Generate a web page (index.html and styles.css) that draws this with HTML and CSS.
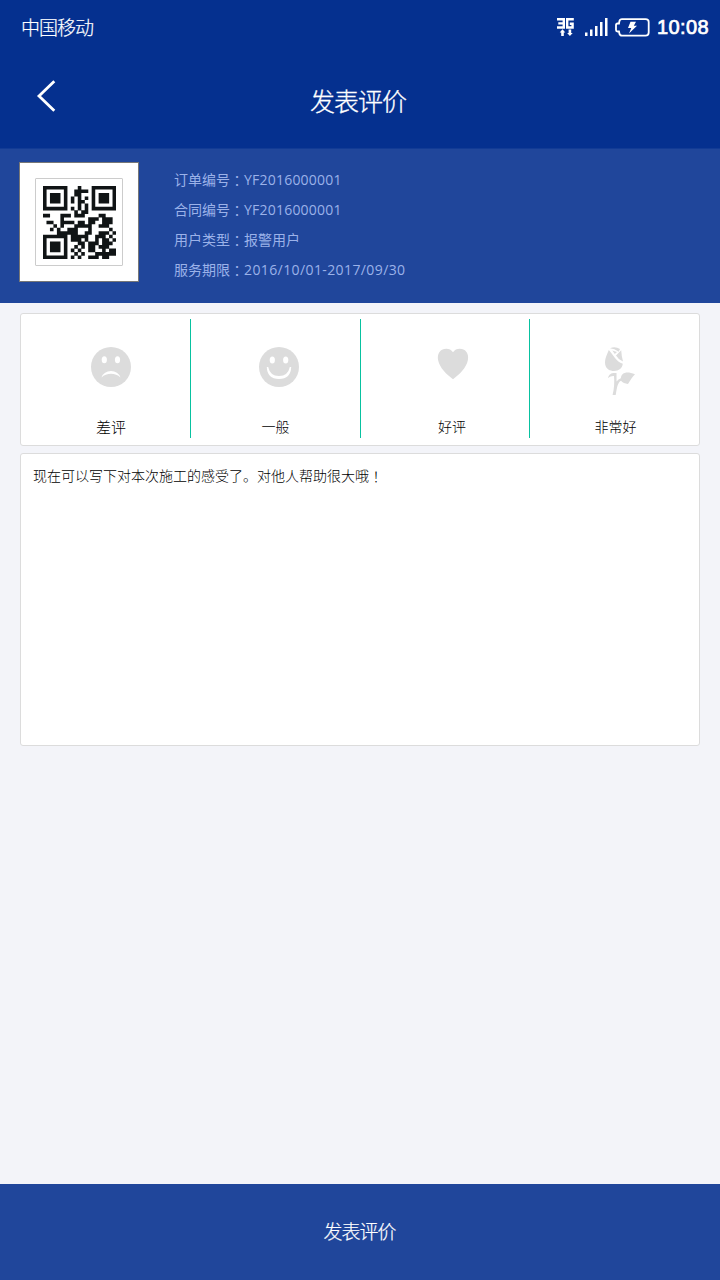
FILE: index.html
```
<!DOCTYPE html>
<html lang="zh-CN">
<head>
<meta charset="utf-8">
<title>发表评价</title>
<link rel="stylesheet" href="styles.css">
</head>
<body>
<div class="app">
  <header class="header">
    <div class="status">
      <span class="carrier">中国移动</span>
      <svg class="status-icons" width="96" height="22" viewBox="0 0 96 22" fill="#fff">
        <path d="M2 1.2H8.8V9.5H2M3.3 5.4H9" fill="none" stroke="#fff" stroke-width="2.4"/>
        <path d="M18.8 1.2H12.2V9.5H17.6V5.8H14.8" fill="none" stroke="#fff" stroke-width="2.4"/>
        <path d="M7.5 11.2L10.3 14.5H8.8V18H6.2V14.5H4.7ZM14.9 18L12.1 15H13.6V11.5H16.2V15H17.7Z"/>
        <path d="M30 14.5h2.5V18H30zM35 11.5h2.5V18H35zM40 8h2.5v10H40zM45 4h2.5v14H45zM50 0h2.5v18H50z"/>
        <path d="M67 1.2H90.5Q93.7 1.2 93.7 4V14.5Q93.7 17.6 90.5 17.6H67Q64.8 17.6 64.4 15.5L64 13.5H62.5Q61 13.5 61 12V7Q61 5.5 62.5 5.5H64L64.4 3.2Q64.8 1.2 67 1.2Z" fill="none" stroke="#fff" stroke-width="1.8"/>
        <path d="M75.5 3.8H81L78.8 7.8H82L74 15.5L76.3 10H73Z"/>
      </svg>
      <span class="clock">10:08</span>
    </div>
    <div class="nav">
      <svg class="back" width="20" height="32" viewBox="0 0 20 32"><path d="M18.3 1.2L3 16L18.3 30.8" fill="none" stroke="#fff" stroke-width="2.8"/></svg>
      <h1 class="title">发表评价</h1>
    </div>
  </header>

  <section class="order">
    <div class="qr-card">
      <div class="qr-frame"><svg class="qr" id="qr" viewBox="0 0 21 21"></svg></div>
    </div>
    <ul class="details">
      <li>订单编号<span class="mark" lang="zh-TW">：</span><span class="number">YF2016000001</span></li>
      <li>合同编号<span class="mark" lang="zh-TW">：</span><span class="number">YF2016000001</span></li>
      <li>用户类型<span class="mark" lang="zh-TW">：</span>报警用户</li>
      <li>服务期限<span class="mark" lang="zh-TW">：</span><span class="period">2016/10/01-2017/09/30</span></li>
    </ul>
  </section>

  <main class="content">
    <section class="ratings">
      <div class="rating rating-bad">
        <svg class="icon" width="48" height="50" viewBox="0 0 48 50"><circle cx="24" cy="21" r="20" fill="#dcdcdc"/><g fill="#fff"><ellipse cx="17.3" cy="13.8" rx="2.6" ry="3.5"/><ellipse cx="30.5" cy="13.8" rx="2.6" ry="3.5"/><path d="M14.4 31.5Q17 25 24 25Q31 25 33.5 31.5Q29.5 27.8 24 27.8Q18.5 27.8 14.4 31.5Z"/></g></svg>
        <span class="label">差评</span>
      </div>
      <div class="rating rating-fair">
        <svg class="icon" width="48" height="50" viewBox="0 0 48 50"><circle cx="24" cy="21" r="20" fill="#dcdcdc"/><g fill="#fff"><ellipse cx="17.3" cy="14" rx="2.6" ry="3.5"/><ellipse cx="30.7" cy="14" rx="2.6" ry="3.5"/><path d="M11.8 21H13.2Q15 30 24 30Q33 30 34.8 21H36.2Q35.8 33 24 33Q12.2 33 11.8 21Z"/></g></svg>
        <span class="label">一般</span>
      </div>
      <div class="rating rating-good">
        <svg class="icon" width="48" height="50" viewBox="0 0 48 50"><path d="M24 6.2C21.5 2.3 16.5 2 13 3.8C9.5 5.8 8.2 10 9.2 14.5C10.8 21.8 17.5 28.5 24 33.2C30.5 28.5 37.2 21.8 38.8 14.5C39.8 10 38.5 5.8 35 3.8C31.5 2 26.5 2.3 24 6.2Z" fill="#dcdcdc"/></svg>
        <span class="label">好评</span>
      </div>
      <div class="rating rating-great">
        <svg class="icon" width="48" height="50" viewBox="0 0 48 50"><g fill="#dcdcdc"><path d="M12.8 4C11 9 8.4 13 9.2 18.5C10 23 14 25 18 25C23 25 26.3 22 26.8 17.8C20 15.5 17.5 9 12.8 4Z"/><path d="M14 2.3Q19 -.3 24 3L22.7 5.8Q18.5 2.7 14 2.3ZM16.3 4.5L21 6L18.8 8.1ZM25.2 4.2Q25.5 10 27 15.6Q22.5 13.7 20 9.4Z"/><path d="M12 32C13 27.5 16 26.5 20.5 27V35.5Q22.5 33 24.8 32.3C25.5 27 30 24.8 39 28.2C36 31 34.5 34 32 38C29 37.5 26.5 36.8 25 34.8C21.5 36.5 21 42 19.7 49H16.6C18.3 42 18.5 36 18 30Q15 29.6 12 32Z"/></g></svg>
        <span class="label">非常好</span>
      </div>
    </section>
    <section class="comment">现在可以写下对本次施工的感受了。对他人帮助很大哦<span class="mark" lang="zh-TW">！</span></section>
  </main>

  <footer class="submit">发表评价</footer>
</div>
<script src="qr.js"></script>
</body>
</html>
```
FILE: styles.css
```
* { box-sizing: border-box; }
body {
  margin: 0;
  background: #f3f4f9;
  font-family: "Open Sans", "Noto Sans CJK SC", sans-serif;
  font-weight: 400;
}
.app { display: flex; flex-direction: column; height: 1280px; }
.header { height: 149px; background: #05308f; color: #fff; border-bottom: 1px solid #123b95; }
.status { display: flex; align-items: center; height: 54px; padding: 0 12px 0 21px; }
.carrier { font-size: 19px; line-height: 26px; flex: 1; letter-spacing: -1px; padding-top: 2px; font-weight: 300; -webkit-text-stroke: .2px #fff; }
.status-icons { margin-top: 3px; margin-right: 6px; }
.clock { width: 51px; font: 400 20px/24px "Liberation Sans", sans-serif; -webkit-text-stroke: .7px #fff; white-space: nowrap; letter-spacing: .4px; }
.nav { display: grid; grid-template-columns: 100px 1fr 100px; height: 94px; }
.back { margin: 26px 0 0 36px; }
.title { margin: 30px 0 0; padding-right: 4px; text-align: center; font-size: 25px; line-height: 34px; font-weight: 300; letter-spacing: -1px; -webkit-text-stroke: .3px #fff; }
.order { display: flex; height: 154px; padding: 13px 19px; background: #20469b; }
.qr-card { display: grid; place-items: center; width: 120px; height: 120px; background: #fff; border: 1px solid #777; }
.qr-frame { display: grid; place-items: center; width: 88px; height: 88px; border: 1px solid #ccc; border-radius: 1px; }
.qr { width: 73px; height: 73px; }
.details { list-style: none; margin: 3px 0 0 35px; padding: 0; font-size: 14px; line-height: 30px; color: #9bb2e9; }
.number { letter-spacing: .22px; }
.period { letter-spacing: .4px; }
.mark { font-family: "Noto Sans CJK TC", sans-serif; line-height: 1; vertical-align: -1px; }
.content { flex: 1; padding: 10px 20px; }
.ratings, .comment { background: #fff; border: 1px solid #dcdcdc; border-radius: 3px; }
.ratings { display: grid; grid-template-columns: 170px 170px 169px 1fr; height: 133px; padding: 5px 0 7px; }
.rating { display: flex; flex-direction: column; align-items: center; border-right: 1px solid #08c2a0; }
.rating:last-child { border-right: 0; }
.icon { margin-top: 27px; flex: none; }
.label { margin-top: 20px; font-size: 14px; line-height: 22px; color: #000; font-weight: 300; }
.rating-bad { padding-left: 11px; }
.rating-bad .label { font-size: 15px; }
.rating-fair .icon { margin-left: 7px; }
.rating-good { padding-left: 14px; }
.rating-good .icon { margin-left: 2px; }
.rating-great .icon { margin-left: 10px; }
.rating-great .label { margin-left: 2px; }
.comment { height: 293px; margin-top: 7px; padding: 11px 12px; font-size: 14px; line-height: 22px; color: #000; font-weight: 300; }
.submit { height: 96px; background: #20469b; color: #fff; font-size: 19px; line-height: 97px; padding-right: 1px; text-align: center; letter-spacing: -1px; font-weight: 300; -webkit-text-stroke: .2px #fff; }
```
FILE: qr.js
```
const rows = [
  '111111100010001111111',
  '100000100111101000001',
  '101110100110001011101',
  '101110101010101011101',
  '101110101011001011101',
  '100000100010101000001',
  '111111101010101111111',
  '000000000101100000000',
  '110001110111000011000',
  '000001000000011101110',
  '011001111011011001110',
  '000101000111110011100',
  '001010011100010000010',
  '000011111100110011101',
  '111111101111100111010',
  '100000101110100101101',
  '101110100011011101110',
  '101110100101011011100',
  '101110101010011001011',
  '100000100101000111111',
  '111111101010011101100'
];
let path = '';
rows.forEach((row, y) => [...row].forEach((cell, x) => {
  if (cell === '1') path += `M${x} ${y}h1.03v1.03h-1.03z`;
}));
document.getElementById('qr').innerHTML = `<path d="${path}" fill="#101415"/>`;
```
